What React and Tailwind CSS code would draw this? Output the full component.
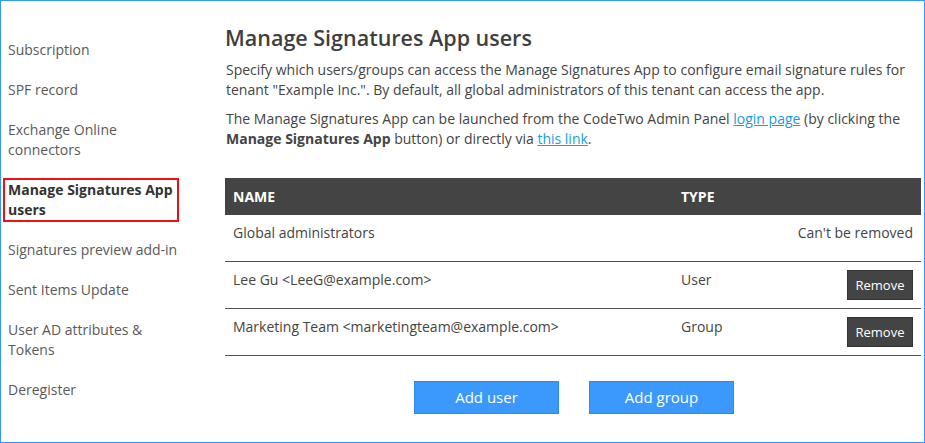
import React from "react";

const navItems = [
  "Subscription",
  "SPF record",
  "Exchange Online connectors",
  "Manage Signatures App users",
  "Signatures preview add-in",
  "Sent Items Update",
  "User AD attributes & Tokens",
  "Deregister",
];

export default function App() {
  return (
    <div className="w-[925px] h-[443px] border border-[#3399ff] bg-white flex font-['Open_Sans',sans-serif] overflow-hidden">
      <div className="w-[224px] shrink-0 pt-[39px] pl-[4px]">
        <div className="flex flex-col gap-5">
          {navItems.map((item) => {
            const active = item === "Manage Signatures App users";
            return (
              <div
                key={item}
                className={
                  active
                    ? "w-[172px] pl-[3px] text-[14px] leading-[20px] font-bold text-[#333] outline-2 outline-[#ee1111]"
                    : "w-[178px] pl-[3px] text-[14px] leading-[20px] text-[#595959]"
                }
              >
                {item}
              </div>
            );
          })}
        </div>
      </div>
      <div className="flex-1 pr-[3px] pt-[22px] text-[#444]">
        <h1 className="text-[21.5px] leading-[30px] font-semibold text-[#3f3f3f]">
          Manage Signatures App users
        </h1>
        <p className="mt-[7px] text-[14px] leading-[20px] pl-[1px]">
          Specify which users/groups can access the Manage Signatures App to configure email signature rules for tenant "Example Inc.". By default, all global administrators of this tenant can access the app.
        </p>
        <p className="mt-[9px] text-[14px] leading-[20px] pl-[1px]">
          The Manage Signatures App can be launched from the CodeTwo Admin Panel{" "}
          <a className="text-[#1b9be0] underline">login page</a> (by clicking the{" "}
          <b className="font-bold">Manage Signatures App</b> button) or directly via{" "}
          <a className="text-[#1b9be0] underline">this link</a>.
        </p>
        <div className="mt-[29px] text-[14px] leading-[20px]">
          <div className="flex h-[37px] items-center bg-[#444] text-white font-bold">
            <div className="w-[448px] pl-[8px]">NAME</div>
            <div className="pl-[8px]">TYPE</div>
          </div>
          <div className="flex h-[47px] border-b border-[#555] items-start">
            <div className="w-[448px] pl-[8px] pt-[8px]">Global administrators</div>
            <div className="flex-1 pt-[8px] pr-[8px] text-right">Can't be removed</div>
          </div>
          <div className="flex h-[47px] border-b border-[#555] items-start">
            <div className="w-[448px] pl-[8px] pt-[8px]">Lee Gu &lt;LeeG@example.com&gt;</div>
            <div className="flex-1 pl-[8px] pt-[8px]">User</div>
            <div className="pt-[8px] pr-[8px]">
              <button className="h-[30px] w-[66px] bg-[#444] border border-[#333] text-white text-[13px]">Remove</button>
            </div>
          </div>
          <div className="flex h-[47px] border-b border-[#555] items-start">
            <div className="w-[448px] pl-[8px] pt-[8px]">Marketing Team &lt;marketingteam@example.com&gt;</div>
            <div className="flex-1 pl-[8px] pt-[8px]">Group</div>
            <div className="pt-[8px] pr-[8px]">
              <button className="h-[30px] w-[66px] bg-[#444] border border-[#333] text-white text-[13px]">Remove</button>
            </div>
          </div>
        </div>
        <div className="mt-[25px] flex justify-center gap-[30px] pl-[2px]">
          <button className="w-[145px] h-[33px] bg-[#3b98fc] border border-[#2a88ee] text-white text-[15px]">Add user</button>
          <button className="w-[145px] h-[33px] bg-[#3b98fc] border border-[#2a88ee] text-white text-[15px]">Add group</button>
        </div>
      </div>
    </div>
  );
}
